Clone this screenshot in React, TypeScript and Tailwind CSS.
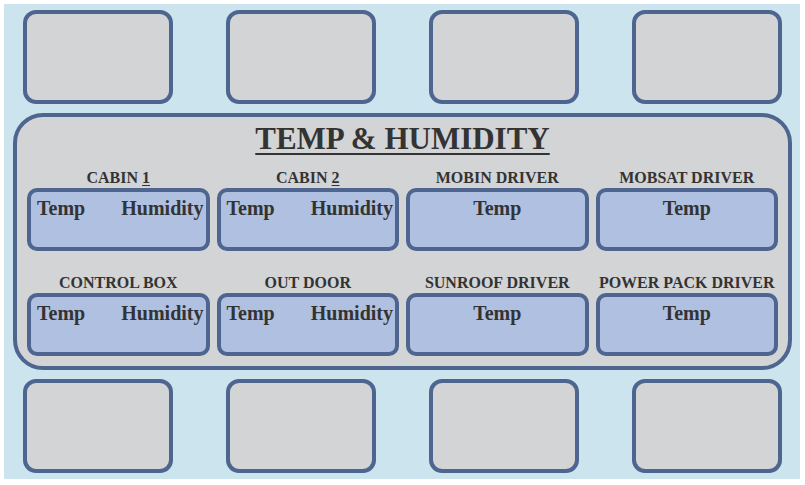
const serif = { fontFamily: '"Liberation Serif", "Times New Roman", serif' }

interface Sensor {
  label: React.ReactNode
  humidity: boolean
}

const sensors: Sensor[] = [
  { label: <>CABIN <span className="underline underline-offset-2">1</span></>, humidity: true },
  { label: <>CABIN <span className="underline underline-offset-2">2</span></>, humidity: true },
  { label: 'MOBIN DRIVER', humidity: false },
  { label: 'MOBSAT DRIVER', humidity: false },
  { label: 'CONTROL BOX', humidity: true },
  { label: 'OUT DOOR', humidity: true },
  { label: 'SUNROOF DRIVER', humidity: false },
  { label: 'POWER PACK DRIVER', humidity: false },
]

function EmptyBox() {
  return (
    <div className="w-[150px] h-[94px] rounded-[13px] border-[4px] border-[#4e6590] bg-[#d3d4d6]" />
  )
}

function SensorCell({ sensor }: { sensor: Sensor }) {
  return (
    <div className="flex flex-col">
      <div className="h-[20px] leading-[20px] text-center text-[16px] font-bold text-[#333333] whitespace-nowrap">
        {sensor.label}
      </div>
      <div className="h-[63px] rounded-[10px] border-[4px] border-[#4e6590] bg-[#afc0e0] pt-[4px]">
        {sensor.humidity ? (
          <div className="flex justify-between pl-[6px] pr-[2px] text-[20px] leading-[24px] font-bold text-[#333333]">
            <span>Temp</span>
            <span>Humidity</span>
          </div>
        ) : (
          <div className="text-center text-[20px] leading-[24px] font-bold text-[#333333]">Temp</div>
        )}
      </div>
    </div>
  )
}

export default function App() {
  return (
    <div className="w-[805px] h-[485px] bg-white pt-[4px] pl-[4px]" style={serif}>
      <div className="w-[796px] h-[475px] bg-[#cce4ee] pt-[6px] flex flex-col">
        {/* top row */}
        <div className="flex gap-[53px] pl-[19px]">
          <EmptyBox />
          <EmptyBox />
          <EmptyBox />
          <EmptyBox />
        </div>

        {/* main panel */}
        <div className="mt-[9px] ml-[9px] w-[779px] h-[257px] rounded-[30px] border-[4px] border-[#4e6590] bg-[#d3d4d6] pt-[4px] px-[10px]">
          <div className="h-[36px] leading-[36px] text-center text-[31px] font-bold text-[#333333]">
            <span className="underline decoration-2 underline-offset-[4px]">TEMP &amp; HUMIDITY</span>
          </div>
          <div className="mt-[11px] grid grid-cols-4 gap-x-[7px] gap-y-[22px]">
            {sensors.map((s, i) => (
              <SensorCell key={i} sensor={s} />
            ))}
          </div>
        </div>

        {/* bottom row */}
        <div className="mt-[9px] flex gap-[53px] pl-[19px]">
          <EmptyBox />
          <EmptyBox />
          <EmptyBox />
          <EmptyBox />
        </div>
      </div>
    </div>
  )
}
